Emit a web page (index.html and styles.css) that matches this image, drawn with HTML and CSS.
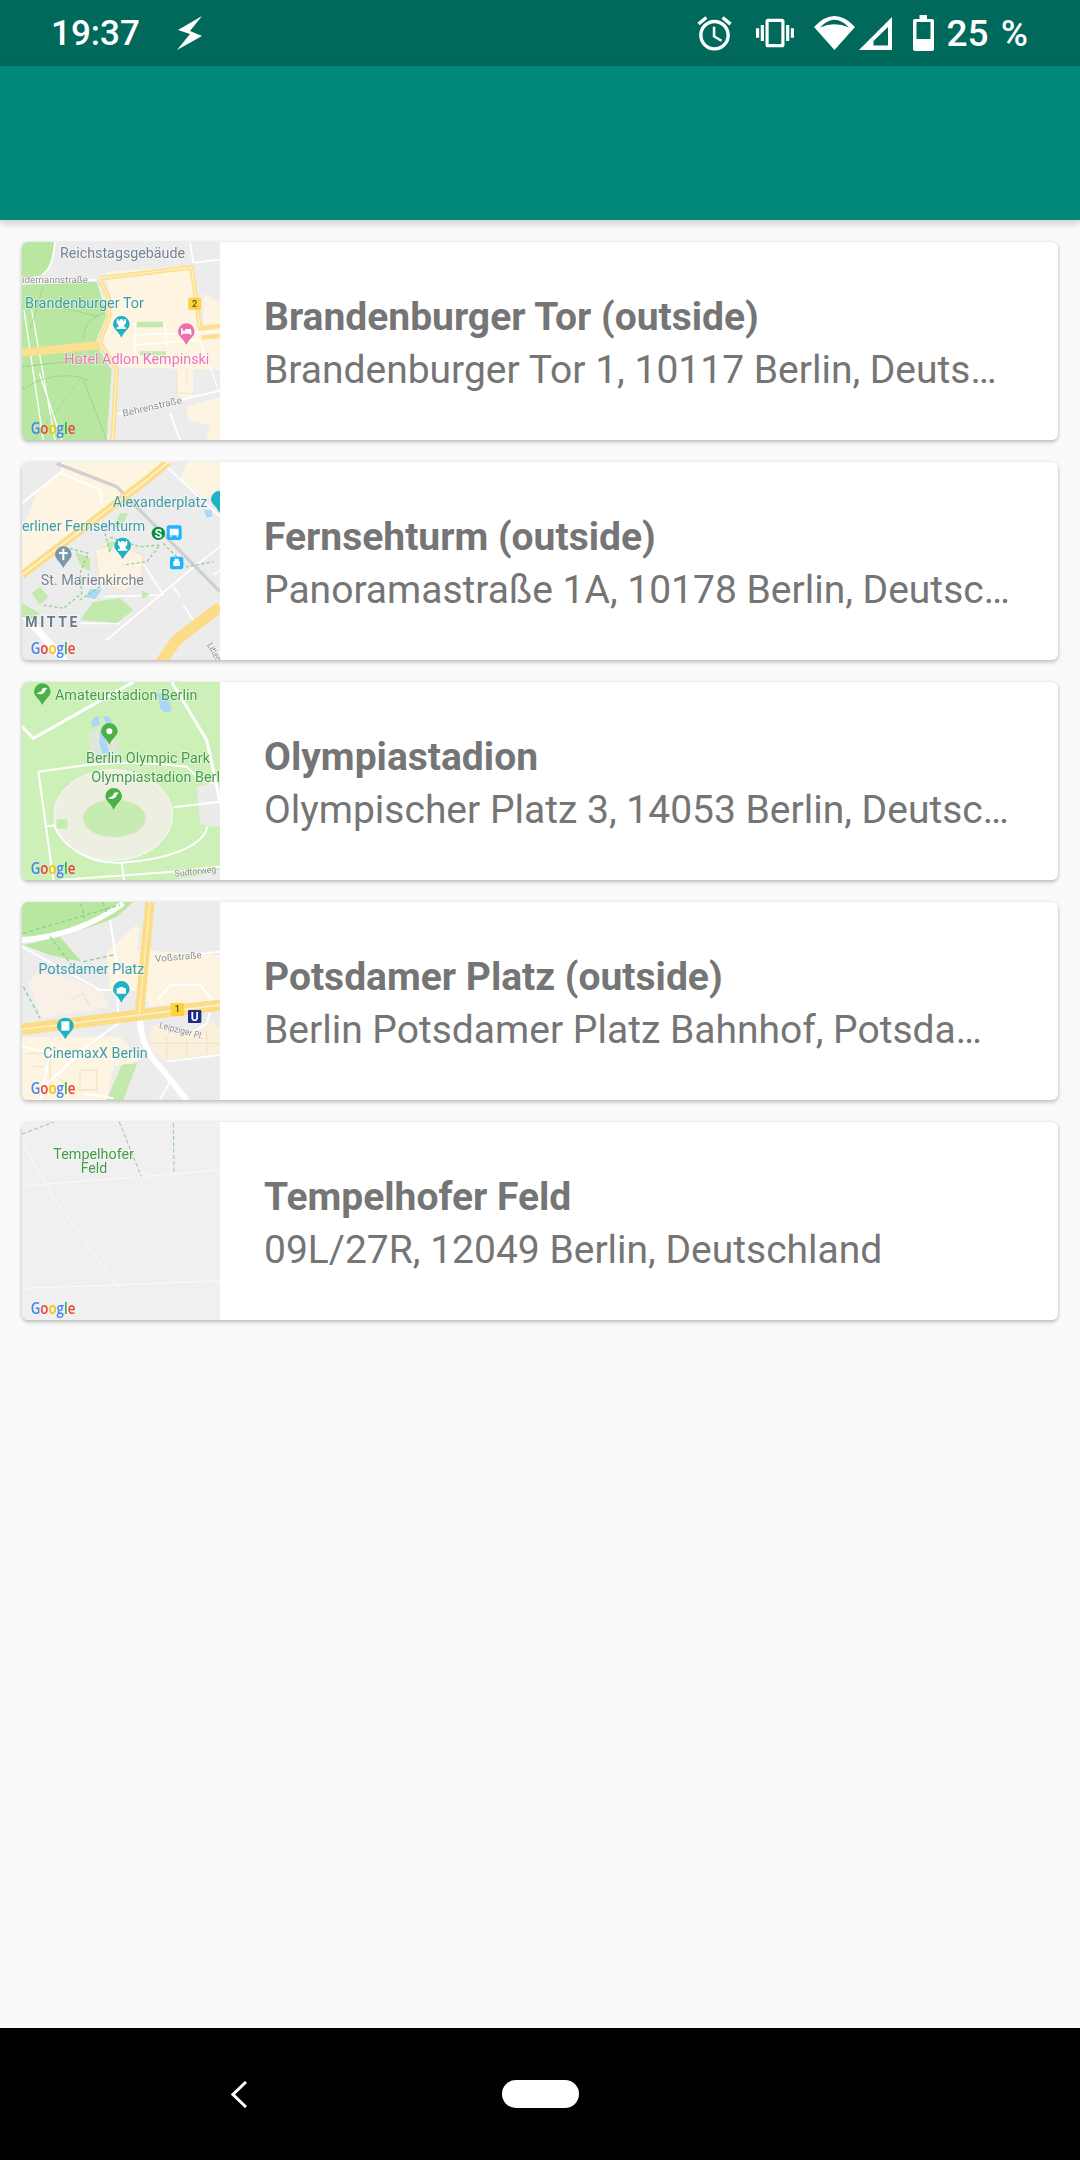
FILE: index.html
```html
<!DOCTYPE html>
<html>
<head>
  <title>Places</title>
  <link rel="stylesheet" href="styles.css">
</head>
<body>
  <svg class="defs">
    <defs>
      <path id="pin" d="M-25 0a25 25 0 1 1 50 0c0 13-15 19-25 40c-10-21-25-27-25-40z"/>
      <text id="google" x="92" y="612" class="google" textLength="134" lengthAdjust="spacingAndGlyphs"><tspan fill="#4285f4">G</tspan><tspan fill="#ea4335">o</tspan><tspan fill="#fbbc05">o</tspan><tspan fill="#4285f4">g</tspan><tspan fill="#34a853">l</tspan><tspan fill="#ea4335">e</tspan></text>
    </defs>
  </svg>

  <div class="status-bar">
    <div class="status-left">
      <span class="time">19:37</span>
      <svg class="bolt" width="25" height="34" viewBox="0 0 25 34"><path fill="#fff" d="M25 0L1 14l12 4L0 34l25-14-12-5z"/></svg>
    </div>
    <div class="status-right">
      <svg class="ic-alarm" width="41" height="41" viewBox="0 0 24 24"><path fill="#fff" d="M22 5.72l-4.6-3.86-1.29 1.53 4.6 3.86L22 5.72zM7.88 3.39L6.6 1.86 2 5.71l1.29 1.53 4.59-3.85zM12.5 8H11v6l4.75 2.85.75-1.23-4-2.37V8zM12 4c-4.97 0-9 4.03-9 9s4.03 9 9 9 9-4.03 9-9-4.03-9-9-9zm0 16c-3.87 0-7-3.13-7-7s3.13-7 7-7 7 3.13 7 7-3.13 7-7 7z"/></svg>
      <svg class="ic-vibrate" width="38" height="38" viewBox="0 0 24 24"><path fill="#fff" d="M0 15h2V9H0v6zm3 2h2V7H3v10zm19-8v6h2V9h-2zm-3 8h2V7h-2v10zM16.5 3h-9C6.67 3 6 3.67 6 4.5v15c0 .83.67 1.5 1.5 1.5h9c.83 0 1.5-.67 1.5-1.5v-15c0-.83-.67-1.5-1.5-1.5zM16 19H8V5h8v14z"/></svg>
      <svg class="ic-wifi" width="41" height="34" viewBox="0 0 41 34"><path fill="#fff" fill-rule="evenodd" d="M0 11Q20.5-11 41 11L20.5 34zM6 11.500Q20.500-4 35 11.500Q20.500 5 6 11.500z"/></svg>
      <svg class="ic-signal" width="33" height="33" viewBox="0 0 33 33"><path fill="#fff" fill-rule="evenodd" d="M0 33L33 0v33zM14.500 28.500H29V10L14.500 24z"/></svg>
      <svg class="ic-battery" width="21" height="36" viewBox="0 0 21 36"><path fill="#fff" fill-rule="evenodd" d="M6.500 0H14v4h5a2 2 0 0 1 2 2v28a2 2 0 0 1-2 2H2a2 2 0 0 1-2-2V6a2 2 0 0 1 2-2h4.500zM3.500 7v17h14V7z"/></svg>
      <span class="battery-text">25 %</span>
    </div>
  </div>

  <div class="app-bar"></div>

  <div class="place-list">

    <div class="card">
      <svg class="map" viewBox="66 36 594 594">
        <rect x="66" y="36" width="594" height="594" fill="#ececec"/>
        <path fill="#fdf5e2" d="M320 125L580 108L600 300L660 290V420L360 412L310 340L330 260z"/>
        <path fill="#fdf5e2" d="M610 190L660 220V290H610zM560 530L660 500V630H620L630 585L565 570zM530 420H580V500H535z"/>
        <path fill="#b9e7a1" d="M66 36H165C160 90 150 120 130 135L66 145z"/>
        <path fill="#b9e7a1" d="M66 165L290 155L320 255L285 340L335 420L320 630H66z"/>
        <g fill="none" stroke="#fff">
          <path stroke-width="5" d="M165 36C160 90 150 120 125 135M66 150L290 150M570 36L580 100M585 98L660 88"/>
          <path stroke-width="4" d="M72 240L130 630M95 240L165 630M118 430L185 630"/>
          <path stroke-width="6" d="M355 552L660 482M510 550L540 630"/>
          <path stroke-width="4" d="M405 280H495L500 350M405 280V380M405 315L660 305M405 345L600 330M600 330L655 480"/>
        </g>
        <g fill="none" stroke="#90cf85" stroke-width="2">
          <path d="M66 410L250 390M250 450L320 630M68 480C130 430 220 430 265 450M130 170L90 300M170 230L300 260M250 330C250 280 280 260 310 250"/>
          <path stroke-dasharray="9 7" d="M66 410L200 395M68 470L75 490M100 630L240 450"/>
        </g>
        <path fill="#c3e9ac" d="M410 275H490V292H410zM420 364H498V376H420z"/>
        <path fill="none" stroke="#f3e3c8" stroke-width="3" d="M530 420V490H585M560 420V465"/>
        <g fill="none" stroke="#fde08f" stroke-width="14" stroke-linejoin="round">
          <path d="M300 145L575 112L600 295L660 288M660 318L605 322"/>
          <path d="M300 150L325 200L328 260L298 338L350 418L338 630"/>
          <path stroke-width="24" d="M66 368L300 345"/>
        </g>
        <g fill="none" stroke="#fdf3d8" stroke-width="3"><path d="M300 145L575 112L600 295M300 150L325 200L328 260L298 338L350 418L338 630"/></g>
        <text class="lbl lbl-grey" x="180" y="84" textLength="375" lengthAdjust="spacingAndGlyphs">Reichstagsgebäude</text>
        <text class="lbl lbl-road" x="66" y="160" textLength="198" lengthAdjust="spacingAndGlyphs">idemannstraße</text>
        <text class="lbl lbl-teal" x="75" y="234" textLength="357" lengthAdjust="spacingAndGlyphs">Brandenburger Tor</text>
        <text class="lbl lbl-pink" x="193" y="402" textLength="435" lengthAdjust="spacingAndGlyphs">Hotel Adlon Kempinski</text>
        <text class="lbl lbl-road" x="370" y="560" transform="rotate(-13 370 560)" textLength="182" lengthAdjust="spacingAndGlyphs">Behrenstraße</text>
        <rect x="565" y="203" width="38" height="36" rx="3" fill="#fdd23c"/>
        <text class="shield" x="584" y="231">2</text>
        <use href="#pin" x="364" y="283" fill="#1fb1c4"/>
        <path fill="#fff" d="M350 268h5v4h4v-4h10v4h4v-4h5v12l-5 4v8h5v5h-28v-5h5v-8l-5-4z"/>
        <use href="#pin" x="559" y="305" fill="#ec6fb0"/>
        <path fill="#fff" d="M543 295h5v7h8v-5h14q4 0 4 4v14h-4v-4h-23v4h-4z"/>
        <use href="#google"/>
      </svg>
      <div class="info">
        <div class="title">Brandenburger Tor (outside)</div>
        <div class="address">Brandenburger Tor 1, 10117 Berlin, Deuts…</div>
      </div>
    </div>

    <div class="card">
      <svg class="map" viewBox="66 36 594 594">
        <rect x="66" y="36" width="594" height="594" fill="#ececec"/>
        <path fill="#fdf5e2" d="M185 65L190 36H500L66 370V240L110 130z"/>
        <path fill="#fdf5e2" d="M560 36H660V110L620 150L540 90z"/>
        <path fill="#fdf3e3" stroke="#f2e2cc" stroke-width="3" d="M285 300L345 285L430 315L425 385L370 425L300 395z"/>
        <g fill="none" stroke="#fff">
          <path stroke-width="6" d="M66 160L185 65L190 36M185 70L300 120L305 160"/>
          <path stroke-width="5" d="M320 570L570 360L660 290M430 340L490 435M240 520L360 520M310 440L490 435M520 410L540 440M550 465L585 520M660 360L640 375M500 50L660 200"/>
          <path stroke-width="22" d="M60 480L200 640"/>
        </g>
        <path fill="none" stroke="#d0d0d0" stroke-width="10" d="M170 40L350 110L660 425"/>
        <path fill="none" stroke="#fcdc87" stroke-width="24" d="M66 375L440 90L505 36"/>
        <path fill="none" stroke="#fdf3d0" stroke-width="5" d="M66 375L440 90L505 36"/>
        <path fill="none" stroke="#fcdc87" stroke-width="34" d="M480 640L530 570L660 470"/>
        <path fill="#c3e9ac" d="M66 460L120 490L90 510L66 500zM120 410L145 440L120 465L95 430zM225 305L270 325V365L240 345zM280 455L360 445L400 480L350 520L240 510zM425 420L450 432L427 447zM320 275L345 275L330 310zM360 190L385 190L365 230L340 230z"/>
        <path fill="#a9d7f5" d="M270 418L306 418L285 448L258 440zM612 180L636 180V200L620 202z"/>
        <g fill="none" stroke="#8fd08a" stroke-width="4" stroke-dasharray="9 7"><path d="M210 295L265 310L240 370L245 430L190 475L130 465M315 250L330 310M330 262L420 290L480 285L440 335L370 345M490 280L560 350L640 335M300 410L240 450"/></g>
        <text class="lbl lbl-teal" x="338" y="172" textLength="284" lengthAdjust="spacingAndGlyphs">Alexanderplatz</text>
        <text class="lbl lbl-teal" x="66" y="242" textLength="370" lengthAdjust="spacingAndGlyphs">erliner Fernsehturm</text>
        <text class="lbl lbl-grey" x="122" y="405" textLength="310" lengthAdjust="spacingAndGlyphs">St. Marienkirche</text>
        <text class="lbl lbl-slate" x="76" y="532" textLength="164">MITTE</text>
        <text class="lbl lbl-road" x="620" y="585" transform="rotate(60 620 585)" textLength="60" lengthAdjust="spacingAndGlyphs">Litten</text>
        <circle cx="475" cy="250" r="20" fill="#0b8f44"/>
        <text class="sbahn" x="475" y="263">S</text>
        <rect x="500" y="226" width="45" height="44" rx="8" fill="#20b4ff"/>
        <path fill="#fff" d="M509 236h27v20h-4l3 6h-4l-2-6h-13l-2 6h-4l3-6h-4z"/>
        <rect x="510" y="320" width="40" height="38" rx="6" fill="#20b4ff"/>
        <path fill="#fff" d="M524 326h12v8h4v14h-20v-14h4z"/>
        <use href="#pin" x="368" y="288" fill="#1fb1c4"/>
        <path fill="#fff" d="M354 273h5v4h4v-4h10v4h4v-4h5v12l-5 4v8h5v5h-28v-5h5v-8l-5-4z"/>
        <use href="#pin" x="190" y="314" fill="#7a97ad"/>
        <path fill="#fff" d="M187 296h6v10h10v6h-10v19h-6v-19h-10v-6h10z"/>
        <use href="#pin" x="658" y="148" fill="#1fb1c4"/>
        <use href="#google"/>
      </svg>
      <div class="info">
        <div class="title">Fernsehturm (outside)</div>
        <div class="address">Panoramastraße 1A, 10178 Berlin, Deutsc…</div>
      </div>
    </div>

    <div class="card">
      <svg class="map" viewBox="66 36 594 594">
        <rect x="66" y="36" width="594" height="594" fill="#cdf0b9"/>
        <path fill="#ebebeb" d="M590 350L640 340L660 345V470H640L600 460zM600 615L660 600V630H520z"/>
        <path fill="#dfe8d8" d="M268 185L300 178L355 220V275L268 280z"/>
        <path fill="#a9d7f5" d="M272 160Q282 135 296 140L300 165L280 172zM308 140Q330 132 336 158L318 160zM300 180L318 210L328 248L308 252L298 220zM472 70H498L516 120Q500 135 482 118z"/>
        <g fill="none" stroke="#fff" stroke-width="6">
          <path stroke-width="9" d="M66 170L100 205L400 36M515 36L620 210L640 300L660 400"/>
          <path d="M115 305L260 285L360 278L480 282L560 290L600 330L640 340M115 305L160 630M140 468H200M520 412L660 395M365 578L372 630M180 630L520 605L660 590M622 470C610 530 500 570 365 578C260 585 180 520 160 460"/>
        </g>
        <ellipse cx="340" cy="435" rx="178" ry="136" fill="#ecefe2" stroke="#fafafa" stroke-width="3"/>
        <ellipse cx="343" cy="445" rx="95" ry="57" fill="#c6ecb1" stroke="#efe7d5" stroke-width="3"/>
        <rect x="170" y="448" width="32" height="28" fill="#c6ecb1"/>
        <text class="lbl lbl-green" x="165" y="90" textLength="427" lengthAdjust="spacingAndGlyphs">Amateurstadion Berlin</text>
        <text class="lbl lbl-green" x="258" y="278" textLength="372" lengthAdjust="spacingAndGlyphs">Berlin Olympic Park</text>
        <text class="lbl lbl-green" x="274" y="335" textLength="386" lengthAdjust="spacingAndGlyphs">Olympiastadion Berl</text>
        <text class="lbl lbl-road" x="525" y="620" transform="rotate(-6 525 620)" textLength="125" lengthAdjust="spacingAndGlyphs">Südtorweg</text>
        <use href="#pin" x="127" y="65" fill="#4cb048"/>
        <path fill="#fff" d="M110 70l14-6 4-9q8-4 14 0l-6 6q0 8-8 10q-10 4-18-1z"/>
        <use href="#pin" x="328" y="184" fill="#4cb048"/>
        <circle cx="328" cy="184" r="9" fill="#fff"/>
        <use href="#pin" x="341" y="379" fill="#4cb048"/>
        <path fill="#fff" d="M324 384l14-6 4-9q8-4 14 0l-6 6q0 8-8 10q-10 4-18-1z"/>
        <use href="#google"/>
      </svg>
      <div class="info">
        <div class="title">Olympiastadion</div>
        <div class="address">Olympischer Platz 3, 14053 Berlin, Deutsc…</div>
      </div>
    </div>

    <div class="card">
      <svg class="map" viewBox="66 36 594 594">
        <rect x="66" y="36" width="594" height="594" fill="#ececec"/>
        <path fill="#b9e7a1" d="M66 36H400L350 80Q220 140 66 140z"/>
        <path fill="#b9e7a1" d="M70 165L180 140L245 215L150 195z"/>
        <path fill="#f9f1e8" d="M85 280L110 250L200 260L305 305L330 350L125 385z"/>
        <path fill="#fdf5e2" d="M320 190L400 110H420L410 180L660 195V330L440 350L450 340L400 300L330 300zM66 440H360L420 510L340 530L320 630H66z"/>
        <path fill="#fbf0dc" d="M450 420L470 400L530 435L640 395L660 420V490L500 510L450 480z"/>
        <path fill="none" stroke="#f3e3c8" stroke-width="4" d="M80 490H150V600M100 530H130M170 560L220 600H290V540H240V590M450 460H660M500 440V510M560 450V500M620 420V490M210 330L250 310L270 350"/>
        <path fill="#c3e9ac" d="M365 525L412 520L370 630H320z"/>
        <g fill="none" stroke="#fff">
          <path stroke-width="16" d="M66 150Q240 135 370 40"/>
          <path stroke-width="6" d="M66 170L300 300L405 298M330 90L350 220L355 400M355 400L230 490L170 560M475 330L510 285H600L640 330L620 400L560 440M66 470L150 490L120 630M230 500L130 590M250 610L340 625M470 205L660 185"/>
          <path stroke-width="18" d="M420 380Q420 470 480 530L560 630"/>
          <path stroke-width="5" d="M500 515L660 495M510 575L480 630"/>
        </g>
        <g fill="none" stroke="#8fd08a" stroke-width="4" stroke-dasharray="12 8"><path d="M68 130L360 45M150 140L215 225M250 215L340 195M70 290L120 385M242 40L255 85M308 36L320 70"/></g>
        <path fill="none" stroke="#fcdc87" stroke-width="34" d="M66 418L660 345"/>
        <path fill="none" stroke="#fdf3d0" stroke-width="4" d="M66 418L660 345"/>
        <path fill="none" stroke="#fcdc87" stroke-width="28" d="M450 36L418 370"/>
        <path fill="none" stroke="#fdf3d0" stroke-width="3" d="M450 36L418 370"/>
        <text class="lbl lbl-teal" x="115" y="252" textLength="317" lengthAdjust="spacingAndGlyphs">Potsdamer Platz</text>
        <text class="lbl lbl-road" x="466" y="216" transform="rotate(-5 466 216)" textLength="140" lengthAdjust="spacingAndGlyphs">Voßstraße</text>
        <text class="lbl lbl-road" x="476" y="413" transform="rotate(15 476 413)" textLength="136" lengthAdjust="spacingAndGlyphs">Leipziger Pl.</text>
        <text class="lbl lbl-teal" x="130" y="505" textLength="313" lengthAdjust="spacingAndGlyphs">CinemaxX Berlin</text>
        <rect x="512" y="339" width="40" height="39" rx="3" fill="#fdd23c"/>
        <text class="shield" x="532" y="367">1</text>
        <rect x="564" y="360" width="40" height="39" rx="4" fill="#1c2a8c"/>
        <text class="ubahn" x="584" y="392">U</text>
        <use href="#pin" x="364" y="298" fill="#1fb1c4"/>
        <path fill="#fff" d="M350 295h6l3-4h10l3 4h6v16h-28z"/>
        <use href="#pin" x="196" y="408" fill="#1fb1c4"/>
        <path fill="#fff" d="M184 394h24v28h-24z"/>
        <use href="#google"/>
      </svg>
      <div class="info">
        <div class="title">Potsdamer Platz (outside)</div>
        <div class="address">Berlin Potsdamer Platz Bahnhof, Potsda…</div>
      </div>
    </div>

    <div class="card">
      <svg class="map" viewBox="66 36 594 594">
        <rect x="66" y="36" width="594" height="594" fill="#f0f0f0"/>
        <g fill="none" stroke="#fafafa" stroke-width="3">
          <path d="M66 95L160 262L350 525L440 630M66 228L420 200L660 180M66 535L350 525L660 512"/>
        </g>
        <g fill="none" stroke="#8fcb8c" stroke-width="3" stroke-dasharray="12 7">
          <path d="M66 72L162 36M358 36L424 200M520 40L522 192"/>
        </g>
        <text class="lbl lbl-green" x="160" y="147" textLength="242" lengthAdjust="spacingAndGlyphs">Tempelhofer</text>
        <text class="lbl lbl-green" x="242" y="189" textLength="80" lengthAdjust="spacingAndGlyphs">Feld</text>
        <use href="#google"/>
      </svg>
      <div class="info">
        <div class="title">Tempelhofer Feld</div>
        <div class="address">09L/27R, 12049 Berlin, Deutschland</div>
      </div>
    </div>

  </div>

  <div class="nav-bar">
    <svg class="nav-back" width="16" height="27" viewBox="0 0 16 27"><path fill="none" stroke="#fff" stroke-width="3" d="M15 1L2 13.500L15 26"/></svg>
    <div class="nav-home"></div>
  </div>
</body>
</html>
```

FILE: styles.css
```css
html, body {
  margin: 0;
  padding: 0;
}
body {
  width: 1080px;
  height: 2160px;
  display: flex;
  flex-direction: column;
  background-color: #fafafa;
  font-family: Roboto, sans-serif;
  overflow: hidden;
}
.defs {
  display: none;
}

/* status bar */
.status-bar {
  height: 66px;
  flex: none;
  display: flex;
  justify-content: space-between;
  align-items: center;
  padding: 0 52px 0 51px;
  box-sizing: border-box;
  background-color: #00695c;
  color: #fff;
}
.status-left {
  display: flex;
  align-items: center;
  gap: 37px;
}
.time {
  font-size: 35px;
  font-weight: 500;
}
.status-right {
  display: flex;
  align-items: center;
}
.ic-vibrate {
  margin-left: 21px;
}
.ic-wifi {
  margin-left: 20px;
}
.ic-signal {
  margin-left: 4px;
}
.ic-battery {
  margin-left: 21px;
}
.battery-text {
  margin-left: 13px;
  font-size: 37px;
  font-weight: 500;
  word-spacing: 3px;
  white-space: nowrap;
}

.app-bar {
  height: 154px;
  flex: none;
  background-color: #00897b;
  box-shadow: 0 3px 8px rgba(0, 0, 0, 0.2);
  position: relative;
}

/* list */
.place-list {
  flex: 1;
  display: flex;
  flex-direction: column;
  gap: 22px;
  padding: 22px;
}
.card {
  height: 198px;
  display: flex;
  background-color: #fff;
  border-radius: 6px;
  box-shadow: 0 2px 4px rgba(0, 0, 0, 0.25), 0 0 2px rgba(0, 0, 0, 0.08);
}
.map {
  width: 198px;
  height: 198px;
  flex: none;
  border-radius: 6px 0 0 6px;
  filter: blur(0.4px);
}
.info {
  flex: 1;
  min-width: 0;
  padding: 5px 0 0 44px;
  box-sizing: border-box;
  display: flex;
  flex-direction: column;
  justify-content: center;
  color: #757575;
  font-size: 39px;
  white-space: nowrap;
}
.title {
  font-weight: 700;
  line-height: 53px;
}
.address {
  line-height: 53px;
}

/* map labels */
.lbl {
  font-family: Roboto, sans-serif;
  font-size: 42px;
  paint-order: stroke;
  stroke: rgba(255, 255, 255, 0.6);
  stroke-width: 4px;
}
.lbl-grey {
  fill: #76838f;
}
.lbl-road {
  fill: #8d8d8d;
  font-size: 28px;
}
.lbl-teal {
  fill: #3d9aa5;
}
.lbl-pink {
  fill: #ee72b6;
}
.lbl-green {
  fill: #439a48;
}
.lbl-slate {
  fill: #67798a;
  font-weight: 700;
  letter-spacing: 8px;
}
.google {
  font-family: "Open Sans", sans-serif;
  font-size: 48px;
  font-weight: 600;
}
.shield {
  font-family: Roboto, sans-serif;
  font-size: 28px;
  font-weight: 500;
  fill: #5a4a10;
  text-anchor: middle;
}
.sbahn {
  font-family: Roboto, sans-serif;
  font-size: 36px;
  font-weight: 700;
  fill: #fff;
  text-anchor: middle;
}
.ubahn {
  font-family: Roboto, sans-serif;
  font-size: 36px;
  font-weight: 700;
  fill: #fff;
  text-anchor: middle;
}

/* nav bar */
.nav-bar {
  height: 132px;
  flex: none;
  background-color: #000;
  display: flex;
  align-items: center;
  box-sizing: border-box;
  padding-left: 231px;
}
.nav-home {
  width: 77px;
  height: 28px;
  margin-left: 255px;
  border-radius: 14px;
  background-color: #fff;
}
```
